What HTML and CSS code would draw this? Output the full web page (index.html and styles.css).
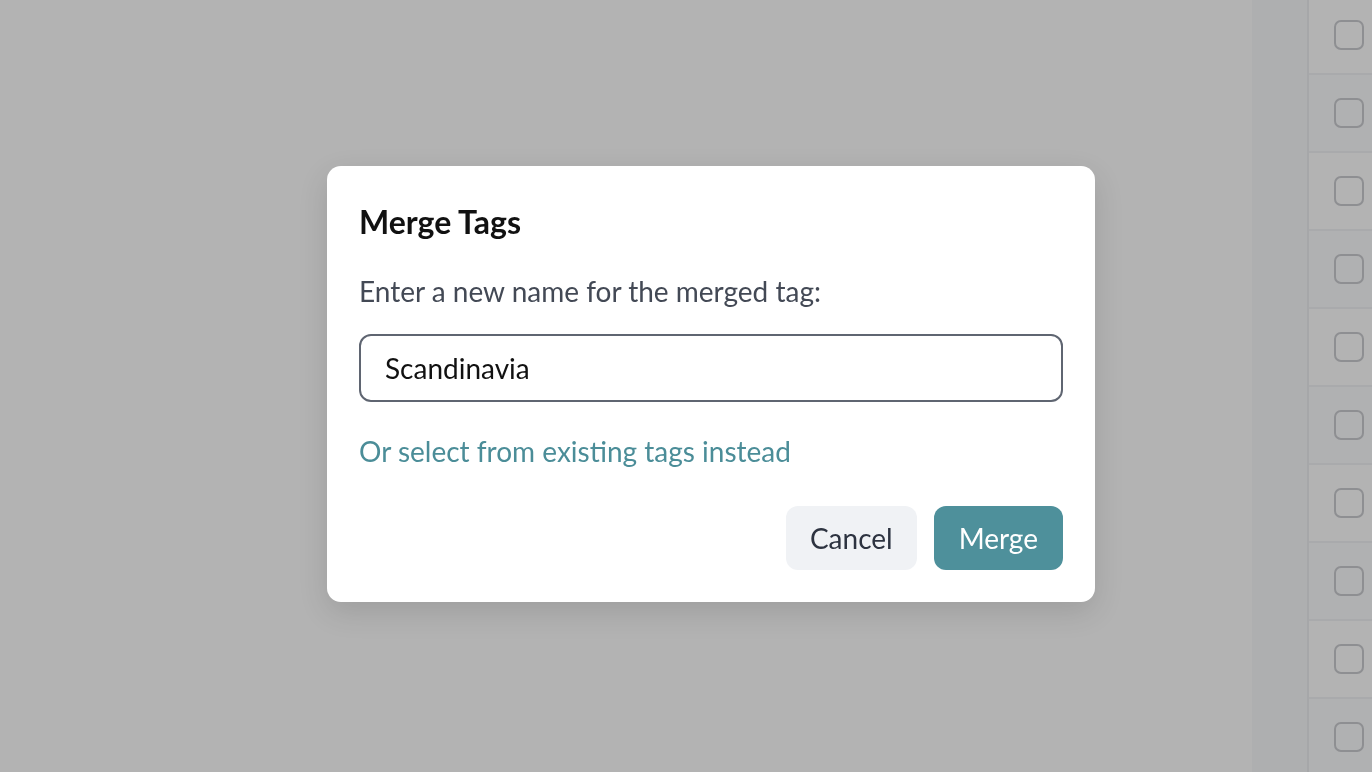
FILE: index.html
```html
<!DOCTYPE html>
<html lang="en">
<head>
    <meta charset="UTF-8">
    <meta name="viewport" content="width=device-width, initial-scale=1.0">
    <title>Merge Tags</title>
    <link rel="stylesheet" href="styles.css">
</head>
<body>
    <div class="page">
        <div class="main"></div>
        <div class="side-column"></div>
        <div class="tag-list">
            <div class="tag-row"><span class="checkbox"></span></div>
            <div class="tag-row"><span class="checkbox"></span></div>
            <div class="tag-row"><span class="checkbox"></span></div>
            <div class="tag-row"><span class="checkbox"></span></div>
            <div class="tag-row"><span class="checkbox"></span></div>
            <div class="tag-row"><span class="checkbox"></span></div>
            <div class="tag-row"><span class="checkbox"></span></div>
            <div class="tag-row"><span class="checkbox"></span></div>
            <div class="tag-row"><span class="checkbox"></span></div>
            <div class="tag-row"><span class="checkbox"></span></div>
        </div>
    </div>

    <div class="overlay">
        <div class="dialog">
            <h1>Merge Tags</h1>
            <p class="label">Enter a new name for the merged tag:</p>
            <input type="text" class="name-input" value="Scandinavia">
            <a href="#" class="link">Or select from existing tags instead</a>
            <div class="actions">
                <button class="btn btn-cancel">Cancel</button>
                <button class="btn btn-merge">Merge</button>
            </div>
        </div>
    </div>
</body>
</html>
```

FILE: styles.css
```css
body {
    font-family: 'Lato', 'Noto Sans', sans-serif;
    margin: 0;
    padding: 0;
    background: #b3b3b3;
    height: 100vh;
    overflow: hidden;
}

.page {
    display: flex;
    height: 100vh;
}

.main {
    flex: 1;
}

.side-column {
    width: 55px;
    background: #aeafb0;
    border-right: 2px solid #a6a7a9;
}

.tag-list {
    width: 63px;
    margin-top: -3px;
}

.tag-row {
    height: 78px;
    box-sizing: border-box;
    border-bottom: 2px solid #a9aaac;
    display: flex;
    align-items: center;
    padding-left: 25px;
}

.tag-row:nth-child(even) {
    background: #b0b1b2;
}

.checkbox {
    width: 26px;
    height: 26px;
    border: 2px solid #8e8f92;
    border-radius: 7px;
}

.overlay {
    position: fixed;
    inset: 0;
    display: flex;
    justify-content: center;
    align-items: center;
    padding: 0 0 4px 50px;
}

.dialog {
    background: #ffffff;
    width: 768px;
    box-sizing: border-box;
    padding: 32px;
    border-radius: 14px;
    box-shadow: 0 10px 30px rgba(0, 0, 0, 0.12);
}

h1 {
    margin: 0;
    font-size: 32px;
    line-height: 48px;
    font-weight: 700;
    color: #111;
}

.label {
    margin: 28px 0 0;
    font-size: 28px;
    line-height: 34px;
    color: #434955;
}

.name-input {
    display: block;
    width: 100%;
    box-sizing: border-box;
    margin-top: 26px;
    height: 68px;
    padding: 0 24px;
    border: 2px solid #5f6571;
    border-radius: 12px;
    font-family: inherit;
    font-size: 28px;
    color: #111;
    outline: none;
}

.link {
    display: block;
    margin-top: 31px;
    font-size: 28px;
    line-height: 36px;
    color: #4b8d98;
    text-decoration: none;
}

.actions {
    display: flex;
    justify-content: flex-end;
    gap: 17px;
    margin-top: 37px;
}

.btn {
    height: 64px;
    padding: 0 24px;
    border: none;
    border-radius: 12px;
    font-family: inherit;
    font-size: 28px;
    cursor: pointer;
}

.btn-cancel {
    background: #f0f2f5;
    color: #2d3340;
}

.btn-merge {
    padding: 0 25px;
    background: #4e909b;
    color: #ffffff;
}
```
